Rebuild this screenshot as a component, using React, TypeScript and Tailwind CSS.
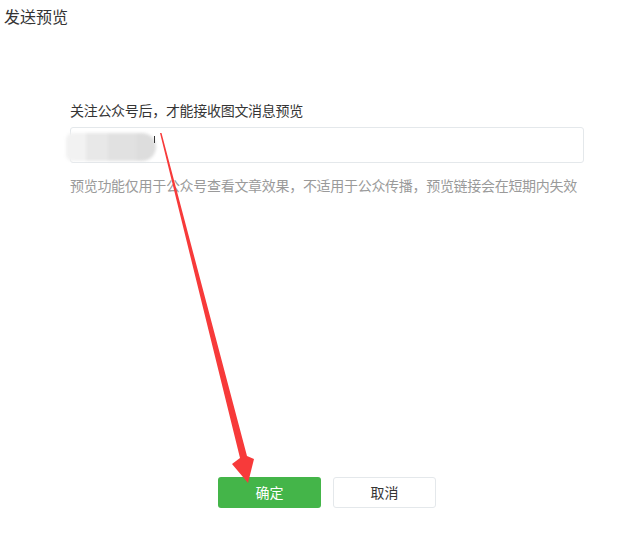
import React from 'react';

const font = { fontFamily: '"Noto Sans CJK SC", "Noto Sans", sans-serif' };

function Arrow() {
  return (
    <svg className="absolute left-0 top-0 pointer-events-none" width="620" height="534" viewBox="0 0 620 534">
      <polygon
        points="160,133 161.5,133 247,456 254,459 248,483 232,464 240,458"
        fill="#f73a3a"
      />
    </svg>
  );
}

function BlurredValue() {
  return (
    <div className="absolute left-[-5px] top-[5px] h-[28px] w-[90px] flex blur-[1.5px] rounded-r-[14px] rounded-l-[6px] overflow-hidden">
      <div className="w-[20px] bg-[#f2f2f2]" />
      <div className="w-[22px] bg-[#e8e8e8]" />
      <div className="w-[28px] bg-[#e1e1e1]" />
      <div className="w-[20px] bg-[#dddddd]" />
    </div>
  );
}

export default function App() {
  return (
    <div className="relative w-[620px] h-[534px] bg-white overflow-hidden" style={font}>
      <h2 className="pl-[4px] pt-[6px] text-[16px] leading-[20px] text-[#333] font-normal">发送预览</h2>

      <div className="ml-[70px] w-[514px] mt-[74px]">
        <p className="text-[14px] leading-[20px] text-[#353535] tracking-[-0.3px]">关注公众号后，才能接收图文消息预览</p>
        <div className="relative mt-[7px] h-[36px] border border-[#e4e8eb] rounded-[3px] bg-white">
          <BlurredValue />
          <div className="absolute left-[83px] top-[8px] w-[1px] h-[7px] bg-[#333]" />
        </div>
        <p className="mt-[12px] text-[14px] leading-[20px] text-[#9a9a9a] whitespace-nowrap tracking-[-0.3px]">
          预览功能仅用于公众号查看文章效果，不适用于公众传播，预览链接会在短期内失效
        </p>

        <div className="mt-[282px] flex justify-center gap-[12px]">
          <button className="w-[103px] h-[31px] rounded-[3px] bg-[#44b549] text-white text-[14px]">确定</button>
          <button className="w-[103px] h-[31px] rounded-[3px] bg-white border border-[#e4e8eb] text-[#353535] text-[14px]">
            取消
          </button>
        </div>
      </div>

      <Arrow />
    </div>
  );
}
